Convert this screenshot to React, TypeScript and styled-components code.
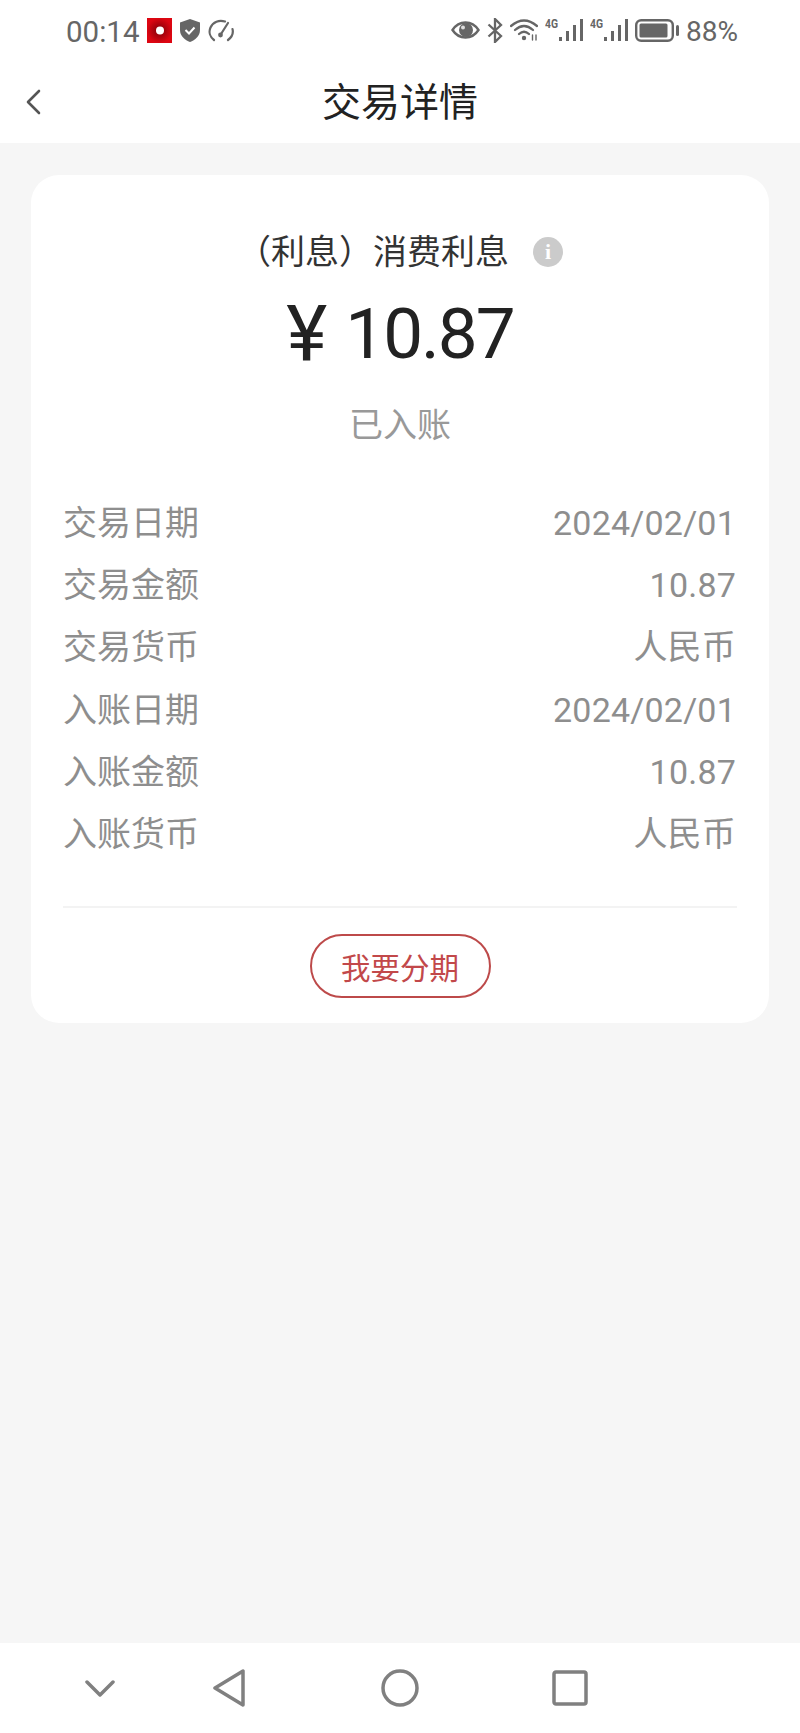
import React from 'react';
import styled, { createGlobalStyle } from 'styled-components';

const GlobalStyle = createGlobalStyle`
  html, body {
    margin: 0;
    padding: 0;
    background: #f6f6f6;
  }
  body {
    font-family: Roboto, "Noto Sans CJK SC", sans-serif;
  }
`;

const Page = styled.div`
  display: flex;
  flex-direction: column;
  width: 800px;
  height: 1733px;
  background: #f6f6f6;
  overflow: hidden;
`;

const StatusBar = styled.div`
  display: flex;
  align-items: center;
  justify-content: space-between;
  height: 60px;
  padding: 0 62px 0 66px;
  background: #fff;
  color: #666;
`;

const StatusGroup = styled.div`
  display: flex;
  align-items: center;
  gap: ${(p: { $gap: number }) => p.$gap}px;
`;

const Clock = styled.span`
  margin-top: 3px;
  font-size: 29.5px;
  line-height: 36px;
`;

const BatteryText = styled.span`
  margin-top: 3px;
  font-size: 28px;
  line-height: 36px;
`;

const Header = styled.div`
  display: grid;
  grid-template-columns: 1fr auto 1fr;
  align-items: center;
  height: 83px;
  padding-left: 26px;
  background: #fff;
`;

const HeaderTitle = styled.div`
  margin: 2px 0 0 -26px;
  font-size: 39px;
  line-height: 50px;
  color: #222;
`;

const Content = styled.div`
  flex: 1;
  padding: 32px 31px 0;
`;

const Card = styled.div`
  display: flex;
  flex-direction: column;
  align-items: center;
  padding: 55px 32px 25px;
  background: #fff;
  border-radius: 28px;
`;

const TitleRow = styled.div`
  display: flex;
  align-items: center;
  gap: 24px;
  font-size: 34px;
  line-height: 44px;
  color: #333;
`;

const InfoIcon = styled.span`
  display: flex;
  align-items: center;
  justify-content: center;
  width: 30px;
  height: 30px;
  border-radius: 50%;
  background: #cbcbcb;
  color: #fff;
  font-family: "Liberation Serif", serif;
  font-size: 22px;
  font-weight: bold;
`;

const Amount = styled.div`
  display: flex;
  align-items: center;
  gap: 18px;
  margin-top: 18px;
  font-size: 71px;
  line-height: 84px;
  color: #222;
`;

const Currency = styled.span`
  font-size: 78px;
`;

const AmountValue = styled.span`
  letter-spacing: -2px;
`;

const StatusLabel = styled.div`
  margin-top: 27px;
  font-size: 34px;
  line-height: 44px;
  color: #999;
`;

const DetailList = styled.div`
  align-self: stretch;
  margin-top: 45px;
`;

const DetailRow = styled.div`
  display: flex;
  justify-content: space-between;
  height: 62.2px;
  padding-right: 1px;
  font-size: 34px;
  line-height: 62px;
  color: #8e8e8e;
`;

const DetailValue = styled.span`
  letter-spacing: 0.2px;
`;

const Divider = styled.div`
  align-self: stretch;
  height: 2px;
  margin-top: 41px;
  background: #f3f3f3;
`;

const InstallmentButton = styled.button`
  width: 181px;
  height: 64px;
  margin-top: 26px;
  padding: 0;
  border: 2px solid #bd4a4a;
  border-radius: 32px;
  background: #fff;
  color: #c2484a;
  font-family: inherit;
  font-size: 29.5px;
`;

const NavBar = styled.div`
  display: flex;
  align-items: center;
  height: 90px;
  padding-left: 85px;
  background: #fff;
`;

const NavItem = styled.svg<{ $offset: number }>`
  display: block;
  margin-left: ${(p) => p.$offset}px;
  fill: none;
  stroke: #808080;
  stroke-width: 3.5;
  stroke-linecap: round;
  stroke-linejoin: round;
`;

const details = [
  { label: '交易日期', value: '2024/02/01' },
  { label: '交易金额', value: '10.87' },
  { label: '交易货币', value: '人民币' },
  { label: '入账日期', value: '2024/02/01' },
  { label: '入账金额', value: '10.87' },
  { label: '入账货币', value: '人民币' },
];

const RecordIcon = () => (
  <svg width="25" height="25" viewBox="0 0 25 25">
    <defs>
      <radialGradient id="rec">
        <stop offset="0" stopColor="#7d0008" />
        <stop offset="1" stopColor="#dd0612" />
      </radialGradient>
    </defs>
    <rect width="25" height="25" fill="url(#rec)" />
    <circle cx="13" cy="12.5" r="4" fill="#fff" />
  </svg>
);

const ShieldIcon = () => (
  <svg width="20" height="23" viewBox="0 0 20 23">
    <path d="M10 0 L20 3.5 V11 C20 17 15 21 10 23 C5 21 0 17 0 11 V3.5 Z" fill="#666" />
    <path d="M5.5 11 L9 14.5 L14.5 8.5" fill="none" stroke="#fff" strokeWidth="2" />
  </svg>
);

const GaugeIcon = () => (
  <svg width="26" height="23" viewBox="0 0 26 23" fill="none" stroke="#666" strokeWidth="2.2" strokeLinecap="round">
    <path d="M6 21 C2 18 0.5 13 2.5 8.5 C5 3 11 0.5 17 2.5" />
    <path d="M20 21 C24 18 25.5 14 24.5 10" />
    <path d="M13 15 L20 4" />
    <circle cx="12.5" cy="16" r="2.4" fill="#666" stroke="none" />
  </svg>
);

const EyeIcon = () => (
  <svg width="29" height="20" viewBox="0 0 29 20">
    <path d="M1.5 10 C8 0 21 0 27.5 10 C21 20 8 20 1.5 10 Z" fill="none" stroke="#666" strokeWidth="2.4" />
    <circle cx="15" cy="10" r="7" fill="#666" />
    <circle cx="12" cy="7.5" r="2" fill="#ddd" />
  </svg>
);

const BluetoothIcon = () => (
  <svg width="16" height="25" viewBox="0 0 16 25" fill="none" stroke="#666" strokeWidth="2.3">
    <path d="M1.5 6.5 L14 18 L8 24 V1 L14 7 L1.5 18.5" />
  </svg>
);

const WifiIcon = () => (
  <svg width="28" height="24" viewBox="0 0 28 24" fill="none" stroke="#666" strokeWidth="2.3" strokeLinecap="round">
    <path d="M1 8 Q14 -3 27 8" />
    <path d="M5 12 Q14 4 23 12" />
    <path d="M9 16 Q14 11.5 19 16" />
    <circle cx="14" cy="20" r="2.2" fill="#666" stroke="none" />
    <path d="M22.5 17 V22 M26 17 V22" strokeWidth="1.4" />
  </svg>
);

const SignalIcon = () => (
  <svg width="38" height="24" viewBox="0 0 38 24" fill="#666">
    <text x="0" y="10" fontSize="12" fontFamily="Roboto, sans-serif" fontWeight="700" textLength="13" lengthAdjust="spacingAndGlyphs">4G</text>
    <rect x="14" y="19" width="3" height="4" />
    <rect x="21" y="13" width="3" height="10" />
    <rect x="28" y="7" width="3" height="16" />
    <rect x="35" y="1" width="3" height="22" />
  </svg>
);

const BatteryIcon = () => (
  <svg width="44" height="23" viewBox="0 0 44 23">
    <rect x="1.2" y="1.2" width="36.6" height="20.6" rx="5" fill="none" stroke="#666" strokeWidth="2.4" />
    <rect x="4.5" y="4.5" width="28" height="14" rx="1.5" fill="#666" />
    <rect x="41" y="6" width="3" height="11" rx="1.5" fill="#666" />
  </svg>
);

const App = () => {
  return (
    <Page>
      <GlobalStyle />
      <StatusBar>
        <StatusGroup $gap={8}>
          <Clock>00:14</Clock>
          <RecordIcon />
          <ShieldIcon />
          <GaugeIcon />
        </StatusGroup>
        <StatusGroup $gap={7}>
          <EyeIcon />
          <BluetoothIcon />
          <WifiIcon />
          <SignalIcon />
          <SignalIcon />
          <BatteryIcon />
          <BatteryText>88%</BatteryText>
        </StatusGroup>
      </StatusBar>
      <Header>
        <svg width="15" height="26" viewBox="0 0 15 26" fill="none" stroke="#555" strokeWidth="2.6" strokeLinecap="round" strokeLinejoin="round">
          <path d="M13 2 L2 13 L13 24" />
        </svg>
        <HeaderTitle>交易详情</HeaderTitle>
      </Header>
      <Content>
        <Card>
          <TitleRow>
            <span>（利息）消费利息</span>
            <InfoIcon>i</InfoIcon>
          </TitleRow>
          <Amount>
            <Currency>¥</Currency>
            <AmountValue>10.87</AmountValue>
          </Amount>
          <StatusLabel>已入账</StatusLabel>
          <DetailList>
            {details.map((item) => (
              <DetailRow key={item.label}>
                <span>{item.label}</span>
                <DetailValue>{item.value}</DetailValue>
              </DetailRow>
            ))}
          </DetailList>
          <Divider />
          <InstallmentButton>我要分期</InstallmentButton>
        </Card>
      </Content>
      <NavBar>
        <NavItem $offset={0} width="30" height="18" viewBox="0 0 30 18">
          <path d="M2 3 L15 16 L28 3" />
        </NavItem>
        <NavItem $offset={97} width="34" height="38" viewBox="0 0 34 38">
          <path d="M31 2 V36 L3 19 Z" />
        </NavItem>
        <NavItem $offset={135} width="38" height="38" viewBox="0 0 38 38">
          <circle cx="19" cy="19" r="17" />
        </NavItem>
        <NavItem $offset={133} width="36" height="36" viewBox="0 0 36 36">
          <rect x="2" y="2" width="32" height="32" rx="2" />
        </NavItem>
      </NavBar>
    </Page>
  );
};

export default App;
